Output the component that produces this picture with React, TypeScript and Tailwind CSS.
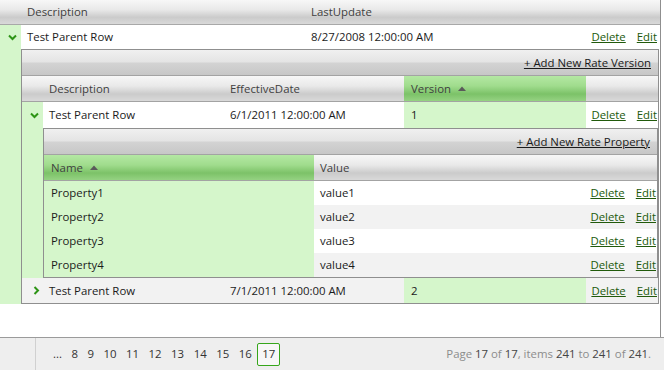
const greenCell = "bg-[#d5f6cb]";
const headerBg =
  "bg-[linear-gradient(to_bottom,#f7f7f7_0%,#e9e9e9_40%,#cbcbcb_72%,#d9d9d9_100%)]";
const barBg =
  "bg-[linear-gradient(to_bottom,#f0f0f0_0%,#e4e4e4_48%,#d3d3d3_52%,#c7c7c7_100%)]";
const sortedBg =
  "bg-[linear-gradient(to_bottom,#b4e8a3_0%,#a0dc8d_40%,#7cc268_72%,#95d282_100%)]";

function Chevron({ open }: { open: boolean }) {
  return open ? (
    <svg width="9" height="7" viewBox="0 0 9 7" className="block">
      <polyline points="1,1.5 4.5,5 8,1.5" fill="none" stroke="#2e9416" strokeWidth="2" />
    </svg>
  ) : (
    <svg width="7" height="9" viewBox="0 0 7 9" className="block">
      <polyline points="1.5,1 5,4.5 1.5,8" fill="none" stroke="#2e9416" strokeWidth="2" />
    </svg>
  );
}

function SortArrow() {
  return (
    <svg width="8" height="5" viewBox="0 0 8 5" className="ml-[7px] inline-block">
      <polygon points="0,5 4,0.5 8,5" fill="#5a5a5a" />
    </svg>
  );
}

function Commands({ pad }: { pad: string }) {
  return (
    <div className={`flex flex-1 items-center justify-end gap-[11px] ${pad}`}>
      <a className="text-[#215a0b] underline">Delete</a>
      <a className="text-[#215a0b] underline">Edit</a>
    </div>
  );
}

function CommandBar({ label }: { label: string }) {
  return (
    <div className={`flex h-[26px] items-center justify-end border-b border-[#a3a3a3] pr-[7px] ${barBg}`}>
      <a className="text-[#1a1a1a] underline">{label}</a>
    </div>
  );
}

const properties = [
  { name: "Property1", value: "value1" },
  { name: "Property2", value: "value2" },
  { name: "Property3", value: "value3" },
  { name: "Property4", value: "value4" },
];

function PropertyTable() {
  return (
    <div className="flex-1 border border-[#8f8f8f]">
      <CommandBar label="+ Add New Rate Property" />
      <div className={`flex h-[26px] items-center border-b border-[#a3a3a3] text-[#3f3f3f] ${headerBg}`}>
        <div className={`flex h-full w-[270px] items-center pl-[7px] ${sortedBg}`}>
          Name
          <SortArrow />
        </div>
        <div className="pl-[6px]">Value</div>
      </div>
      {properties.map((p, i) => (
        <div
          key={p.name}
          className={`flex h-[24px] items-center ${i % 2 ? "bg-[#f2f2f2]" : "bg-white"}`}
        >
          <div className={`flex h-full w-[270px] items-center pl-[7px] ${greenCell}`}>{p.name}</div>
          <div className="w-[270px] pl-[6px]">{p.value}</div>
          <Commands pad="pr-[1px]" />
        </div>
      ))}
    </div>
  );
}

function RateVersionTable() {
  return (
    <div className="mr-[1px] flex-1 border border-[#8f8f8f]">
      <CommandBar label="+ Add New Rate Version" />
      <div className={`flex h-[26px] items-center border-b border-[#a3a3a3] text-[#3f3f3f] ${headerBg}`}>
        <div className="w-[21px]" />
        <div className="w-[181px] pl-[6px]">Description</div>
        <div className="w-[180px] pl-[6px]">EffectiveDate</div>
        <div className={`flex h-full w-[182px] items-center pl-[7px] ${sortedBg}`}>
          Version
          <SortArrow />
        </div>
      </div>
      <div className="flex h-[26px] items-center bg-white">
        <div className={`flex h-full w-[21px] items-center justify-center pl-[4px] ${greenCell}`}>
          <Chevron open />
        </div>
        <div className="w-[181px] pl-[6px]">Test Parent Row</div>
        <div className="w-[180px] pl-[6px]">6/1/2011 12:00:00 AM</div>
        <div className={`flex h-full w-[182px] items-center pl-[7px] ${greenCell}`}>1</div>
        <Commands pad="pr-[1px]" />
      </div>
      <div className="flex">
        <div className={`w-[21px] ${greenCell}`} />
        <PropertyTable />
      </div>
      <div className="flex h-[25px] items-center bg-[#f2f2f2]">
        <div className="flex h-full w-[21px] items-center justify-center pl-[8px]">
          <Chevron open={false} />
        </div>
        <div className="w-[181px] pl-[6px]">Test Parent Row</div>
        <div className="w-[180px] pl-[6px]">7/1/2011 12:00:00 AM</div>
        <div className={`flex h-full w-[182px] items-center pl-[7px] ${greenCell}`}>2</div>
        <Commands pad="pr-[1px]" />
      </div>
    </div>
  );
}

function Pager() {
  const pages = ["...", "8", "9", "10", "11", "12", "13", "14", "15", "16"];
  return (
    <div className="flex h-[33px] items-center border-t border-[#9b9b9b] bg-[#eeeeee]">
      <div className="h-full w-[36px] border-r border-[#d0d0d0]" />
      <div className="ml-[13px] flex items-center gap-[1.5px] text-[#333]">
        {pages.map((p) => (
          <span key={p} className="flex h-[23px] items-center px-[4px]">
            {p}
          </span>
        ))}
        <span className="flex h-[23px] items-center rounded-[2px] border border-[#36a61b] bg-[#f7f7f7] px-[4px]">
          17
        </span>
      </div>
      <div className="ml-auto pr-[13px] text-[#8c8c8c]">
        Page <span className="text-[#444]">17</span> of <span className="text-[#444]">17</span>, items{" "}
        <span className="text-[#444]">241</span> to <span className="text-[#444]">241</span> of{" "}
        <span className="text-[#444]">241</span>.
      </div>
    </div>
  );
}

export default function App() {
  return (
    <div className="h-[370px] w-[664px] overflow-hidden bg-white font-['Open_Sans','Noto_Sans',sans-serif] text-[11.4px] text-[#1b1b1b]">
      <div className="flex h-[337px] w-[661px] flex-col border-r border-[#8f8f8f]">
        <div className={`flex h-[25px] shrink-0 items-center border-b border-[#a8a8a8] text-[#3f3f3f] ${headerBg}`}>
          <div className="w-[21px]" />
          <div className="w-[284px] pl-[6px]">Description</div>
          <div className="pl-[6px]">LastUpdate</div>
        </div>
        <div className="flex h-[24px] shrink-0 items-center bg-white">
          <div className={`flex h-full w-[21px] items-center justify-center pl-[3px] ${greenCell}`}>
            <Chevron open />
          </div>
          <div className="w-[284px] pl-[6px]">Test Parent Row</div>
          <div className="w-[280px] pl-[6px]">8/27/2008 12:00:00 AM</div>
          <Commands pad="pr-[3px]" />
        </div>
        <div className="flex shrink-0">
          <div className={`w-[21px] ${greenCell}`} />
          <RateVersionTable />
        </div>
      </div>
      <Pager />
    </div>
  );
}
